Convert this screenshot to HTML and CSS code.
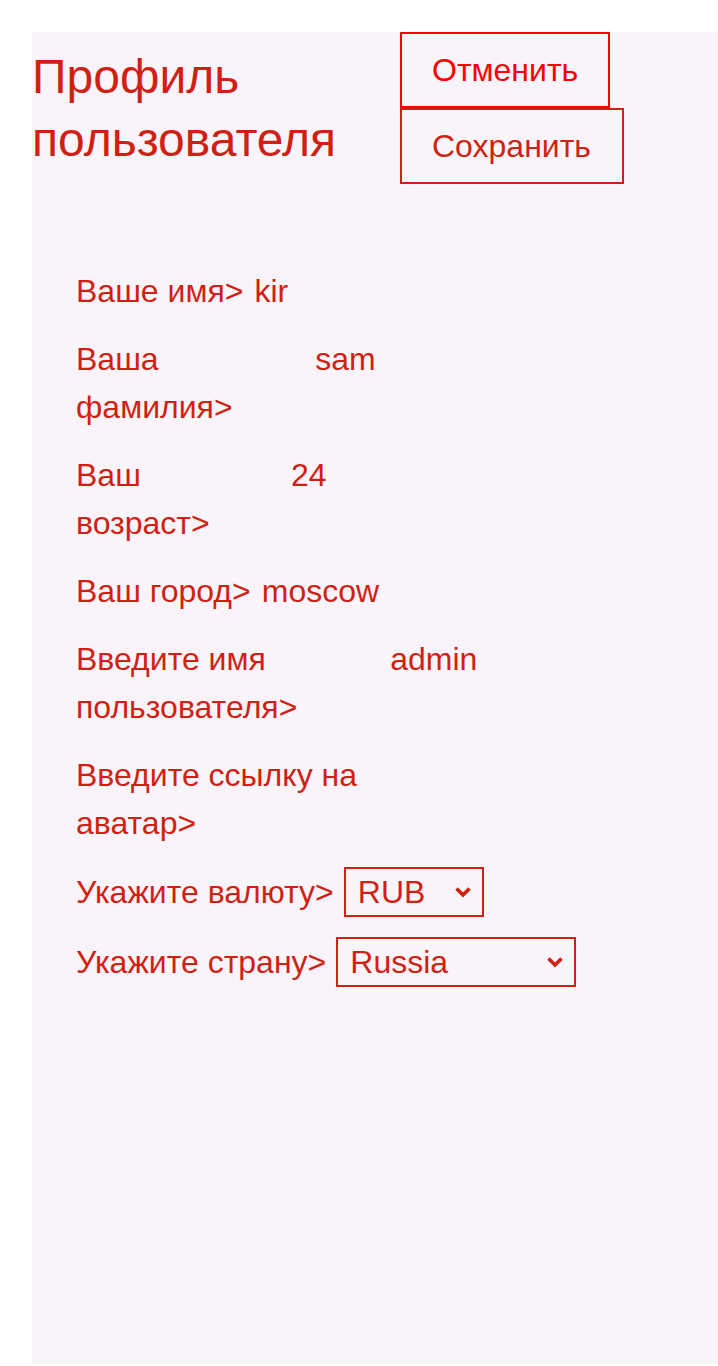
FILE: index.html
```html
<!DOCTYPE html>
<html lang="ru">
<head>
<meta charset="utf-8">
<title>Профиль пользователя</title>
<link rel="stylesheet" href="styles.css">
</head>
<body>
<div class="page">
  <div class="panel">
    <header class="header">
      <h1 class="title">Профиль пользователя</h1>
      <div class="actions">
        <button class="btn btn-cancel" type="button">Отменить</button>
        <button class="btn btn-save" type="button">Сохранить</button>
      </div>
    </header>
    <form class="form">
      <div class="row">
        <label class="label" for="f-name">Ваше имя&gt;</label>
        <input class="field" id="f-name" type="text" value="kir">
      </div>
      <div class="row">
        <label class="label" for="f-surname">Ваша фамилия&gt;</label>
        <input class="field" id="f-surname" type="text" value="sam">
      </div>
      <div class="row">
        <label class="label" for="f-age">Ваш возраст&gt;</label>
        <input class="field" id="f-age" type="text" value="24">
      </div>
      <div class="row">
        <label class="label" for="f-city">Ваш город&gt;</label>
        <input class="field" id="f-city" type="text" value="moscow">
      </div>
      <div class="row">
        <label class="label" for="f-login">Введите имя пользователя&gt;</label>
        <input class="field" id="f-login" type="text" value="admin">
      </div>
      <div class="row">
        <label class="label" for="f-avatar">Введите ссылку на аватар&gt;</label>
        <input class="field" id="f-avatar" type="text" value="">
      </div>
      <div class="row row-select">
        <label class="label" for="f-currency">Укажите валюту&gt;</label>
        <div class="select-wrap">
          <select class="select select-currency" id="f-currency">
            <option>RUB</option>
            <option>USD</option>
            <option>EUR</option>
          </select>
          <svg class="chevron" width="18" height="12" viewBox="0 0 18 12" aria-hidden="true"><path d="M2.5 2.5 L9 9 L15.5 2.5" fill="none" stroke="currentColor" stroke-width="3.6" stroke-linecap="butt" stroke-linejoin="miter"/></svg>
        </div>
      </div>
      <div class="row row-select">
        <label class="label" for="f-country">Укажите страну&gt;</label>
        <div class="select-wrap">
          <select class="select select-country" id="f-country">
            <option>Russia</option>
            <option>Belarus</option>
            <option>Kazakhstan</option>
          </select>
          <svg class="chevron" width="18" height="12" viewBox="0 0 18 12" aria-hidden="true"><path d="M2.5 2.5 L9 9 L15.5 2.5" fill="none" stroke="currentColor" stroke-width="3.6" stroke-linecap="butt" stroke-linejoin="miter"/></svg>
        </div>
      </div>
    </form>
  </div>
</div>
</body>
</html>
```
FILE: styles.css
```css
html, body {
  margin: 0;
  padding: 0;
  background: #ffffff;
}

body {
  font-family: "Liberation Sans", Arial, sans-serif;
  color: #d21f14;
}

.page {
  padding: 32px 0 0 32px;
}

.panel {
  box-sizing: border-box;
  width: 686px;
  min-height: 1332px;
  background: #f9f4fa;
}

.header {
  display: flex;
  align-items: center;
}

.title {
  flex: 0 0 368px;
  margin: 0;
  font-size: 48px;
  font-weight: normal;
  line-height: 63px;
  color: #d21f14;
}

.actions {
  display: flex;
  flex-direction: column;
  align-items: flex-start;
}

.btn {
  font-family: "Liberation Sans", Arial, sans-serif;
  font-size: 32px;
  line-height: 36px;
  padding: 18px 30px;
  background: transparent;
  border: 2px solid #d21f14;
  color: #d21f14;
  margin: 0;
  cursor: pointer;
}

.btn-cancel {
  border-color: #ff0000;
  color: #ff0000;
}

.btn-save {
  padding-right: 31px;
}

.form {
  padding: 83px 44px 0 44px;
}

.row {
  display: flex;
  align-items: flex-start;
  margin-bottom: 20px;
  font-size: 32px;
  line-height: 48px;
}

.row-select {
  align-items: center;
}

.label {
  flex: 0 1 auto;
}

.field {
  box-sizing: border-box;
  flex: 0 1 auto;
  width: 400px;
  min-width: 0;
  height: 48px;
  padding: 0 11px;
  border: 0;
  background: transparent;
  font-family: "Liberation Sans", Arial, sans-serif;
  font-size: 32px;
  color: #d21f14;
  outline: none;
}

.select-wrap {
  position: relative;
  display: flex;
  margin-left: 10px;
  color: #d21f14;
}

.select {
  box-sizing: border-box;
  height: 50px;
  padding: 0 36px 0 12px;
  border: 2px solid #d21f14;
  border-radius: 0;
  background: transparent;
  -webkit-appearance: none;
  appearance: none;
  font-family: "Liberation Sans", Arial, sans-serif;
  font-size: 32px;
  color: #d21f14;
  outline: none;
}

.select-currency {
  width: 140px;
}

.select-country {
  width: 240px;
}

.chevron {
  position: absolute;
  right: 12px;
  top: 19px;
  pointer-events: none;
}
```
